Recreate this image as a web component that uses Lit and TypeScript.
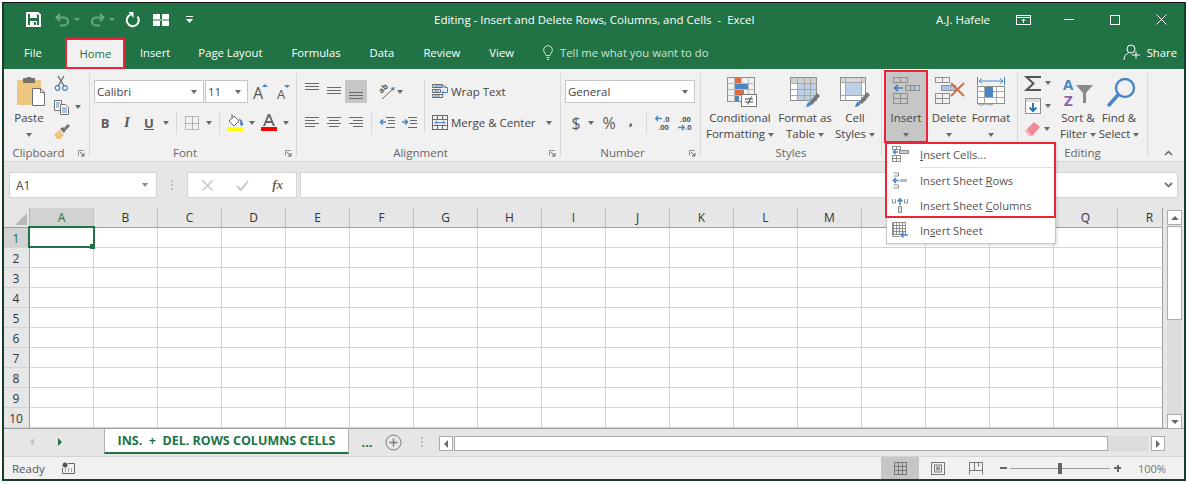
import { LitElement, html, css, svg } from "lit";
import { customElement } from "lit/decorators.js";

const ic = (w: number, h: number, c: unknown, cls = "") =>
  html`<svg class="ic ${cls}" width=${w} height=${h} viewBox="0 0 ${w} ${h}" fill="none">${c}</svg>`;

const G = "#6e6e6e", B = "#4a86c4", O = "#e0693f", L = "#8f8f8f";

const table2 = (x: number, y: number, cw: number, ch: number, cols: number, rows: number, col = L) => {
  const out: unknown[] = [];
  for (let i = 0; i < cols; i++) for (let j = 0; j < rows; j++)
    out.push(svg`<rect x=${x + i * cw + 0.5} y=${y + j * ch + 0.5} width=${cw} height=${ch} stroke=${col}/>`);
  return out;
};
const vlines = (ys: number[], x1 = 0, x2 = 14) =>
  ic(15, 23, svg`${ys.map((y) => svg`<path d="M${x1} ${y}H${x2}" stroke="#6a6a6a"/>`)}`);

const I = {
  save: ic(15, 15, svg`<path d="M1 1h11l2 2v11H1z" stroke="#fff" stroke-width="2" fill="none"/><rect x="4" y="2" width="7" height="4" fill="#fff"/><rect x="4" y="9" width="7" height="5" fill="#fff"/><rect x="8" y="10" width="2" height="3" fill="#217346"/>`),
  undo: ic(15, 13, svg`<path d="M5 1L1.5 4.5 5 8M2 4.5h7a4 4 0 0 1 0 8H5" stroke="#6ba884" stroke-width="2"/>`),
  redo: ic(15, 13, svg`<path d="M10 1l3.5 3.5L10 8M13 4.5H6a4 4 0 0 0 0 8h4" stroke="#6ba884" stroke-width="2"/>`),
  refresh: ic(15, 15, svg`<path d="M5.500 2.600a6 6 0 1 0 7 1.900" stroke="#fff" stroke-width="2"/><path d="M2.500 0l5 0 0 6z" fill="#fff" transform="translate(1 0)"/>`),
  grid: ic(16, 12, svg`<rect width="7" height="5" fill="#fff"/><rect x="9" width="7" height="5" fill="#fff"/><rect y="7" width="7" height="5" fill="#fff"/><rect x="9" y="7" width="7" height="5" fill="#fff"/><path d="M0 6h16" stroke="#fff"/>`),
  custom: ic(7, 8, svg`<path d="M0 .5h7" stroke="#fff"/><path d="M0 3h7L3.5 7z" fill="#fff"/>`),
  display: ic(15, 10, svg`<rect x=".5" y=".5" width="14" height="9" stroke="#fff"/><path d="M.5 2.5h14" stroke="#fff"/><path d="M7.5 8V4M5.5 6l2-2 2 2" stroke="#fff"/>`),
  min: ic(10, 1, svg`<rect width="10" height="1" fill="#fff"/>`),
  max: ic(10, 10, svg`<rect x=".5" y=".5" width="9" height="9" stroke="#fff"/>`),
  close: ic(11, 11, svg`<path d="M.5.5l10 10M10.5.5l-10 10" stroke="#fff"/>`),
  bulb: ic(10, 15, svg`<path d="M3 10.5C2.5 8.5.7 7.5.7 5a4.3 4.3 0 0 1 8.6 0c0 2.5-1.800 3.500-2.300 5.500zM3.500 12.500h3M4 14.500h2" stroke="#cfe3d7"/>`),
  share: ic(18, 17, svg`<circle cx="8" cy="5" r="4" stroke="#fff"/><path d="M1 16c0-4 2-6 4.500-7M9 11h8M13 7.500v7" stroke="#fff"/>`),
  paste: ic(29, 30, svg`<rect y="3" width="24" height="25" rx="1" fill="#edc67f"/><rect x="6" y="1" width="12" height="5" fill="#77736c"/><rect x="10" y="0" width="4" height="3" fill="#77736c"/><path d="M15.500 11.500h8l4 4v13h-12z" fill="#fff" stroke="#6e6e6e"/><path d="M23.500 11.500v4h4" stroke="#6e6e6e"/>`, "r2"),
  cut: ic(15, 15, svg`<path d="M4 0l6 10M10 0L4 10" stroke="#6e6e6e" stroke-width="1.400"/><circle cx="3.500" cy="12" r="2.300" stroke="${B}" stroke-width="1.200"/><circle cx="11" cy="12" r="2.300" stroke="${B}" stroke-width="1.200"/>`),
  copy: ic(16, 15, svg`<path d="M.5.5h7v10h-7z" stroke="${G}" fill="#fff"/><path d="M6.500 4.500h5l3 3v7h-8z" stroke="${G}" fill="#fff"/><path d="M2 3h4M2 5h3M2 7h3M8 8h5M8 10h5M8 12h5" stroke="${B}"/>`),
  brush: ic(16, 15, svg`<path d="M0 11l5-5 5 5-4 4H3z" fill="#edc67f"/><path d="M6 5l3-2 3 3-2 3z" fill="#77736c"/><path d="M10 4l4-4 2 2-4 4z" fill="#77736c"/>`),
  growA: ic(15, 17, svg`<text x="0" y="16" font-size="16" font-family="Open Sans" fill="#555">A</text><path d="M9 4l3-3 3 3z" fill="${B}"/>`),
  shrinkA: ic(13, 15, svg`<text x="0" y="14" font-size="13" font-family="Open Sans" fill="#555">A</text><path d="M7 0h6l-3 3z" fill="${B}"/>`),
  border: ic(14, 14, svg`<path d="M.5.5h13v13H.5zM7.500 .5v13M.5 7.500h13" stroke="#7d7d7d" stroke-dasharray="1 1"/>`),
  fill: ic(17, 17, svg`<path d="M2 7l5-5 5 5-5 5z" stroke="#666" fill="#fff"/><path d="M5 0v5" stroke="#666"/><path d="M12 5a4 4 0 0 1 3 5l1-.500-1.500 2.500-1.500-3 1 .500" fill="${B}" stroke="${B}"/><rect y="13" width="16" height="4" fill="#ffff00"/>`),
  fontA: ic(16, 17, svg`<path d="M2 12L7 0h2l5 12h-2l-1.300-3H5.300L4 12zM6 7h4L8 2.500z" fill="#666" fill-rule="evenodd"/><rect y="13" width="16" height="4" fill="#ff0000"/>`),
  alTop: vlines([3.5, 6.5, 9.5]),
  alMid: vlines([7.5, 10.5, 13.5]),
  alBot: vlines([12.5, 15.5, 18.5], 0, 14),
  alignL: ic(15, 11, svg`<path d="M0 .5h14M0 3.500h10M0 6.500h14M0 9.500h10" stroke="#6a6a6a"/>`),
  alignC: ic(15, 11, svg`<path d="M0 .5h14M2 3.500h10M0 6.500h14M2 9.500h10" stroke="#6a6a6a"/>`),
  alignR: ic(15, 11, svg`<path d="M0 .5h14M4 3.500h10M0 6.500h14M4 9.500h10" stroke="#6a6a6a"/>`),
  orient: ic(17, 16, svg`<text transform="translate(2.500 10) rotate(-45)" font-size="8" font-family="Open Sans" fill="#555">ab</text><path d="M3 15L14 5" stroke="#666"/><path d="M16 3l-4.500 1 3 3z" fill="${B}"/>`),
  indL: ic(16, 12, svg`<path d="M7 .5h9M9 3.500h7M9 6.500h7M7 10.500h9" stroke="#6a6a6a"/><path d="M7 5H2M4 2.500L1.500 5 4 7.500" stroke="${B}" stroke-width="1.600"/>`),
  indR: ic(16, 12, svg`<path d="M7 .5h9M9 3.500h7M9 6.500h7M7 10.500h9" stroke="#6a6a6a"/><path d="M1 5h5M4 2.500L6.500 5 4 7.500" stroke="${B}" stroke-width="1.600"/>`),
  wrap: ic(17, 15, svg`<path d="M.5.5h10v3H.5zM.5 5.500h8v3H.5zM.5 10.500h10v3H.5z" stroke="#6a6a6a"/><path d="M2 2h12M2 7h5M2 12h6" stroke="${B}"/><path d="M12 3.500h3.500v5H10M12 6.500L10 8.500l2 2" stroke="${B}"/>`),
  merge: ic(17, 15, svg`<rect x=".5" y=".5" width="15" height="14" stroke="#6a6a6a"/><path d="M.5 4.500h15M.5 10.500h15M5.500.5v4M10.500.5v4M5.500 10.500v4M10.500 10.500v4" stroke="#6a6a6a"/><path d="M3 7.500h10M5 5.500l-2 2 2 2M11 5.500l2 2-2 2" stroke="${B}"/>`),
  decL: ic(15, 16, svg`<path d="M7 3.500H1M3 1L.7 3.500 3 6" stroke="${B}" stroke-width="1.300"/><text x="8" y="7" font-size="7.500" font-family="Open Sans" fill="#555">.0</text><text x="3" y="15" font-size="7.500" font-family="Open Sans" fill="#555">.00</text>`),
  decR: ic(15, 16, svg`<text x="3" y="7" font-size="7.500" font-family="Open Sans" fill="#555">.00</text><path d="M1 12.500h6M5 10l2.300 2.500L5 15" stroke="${B}" stroke-width="1.300"/><text x="8" y="15" font-size="7.500" font-family="Open Sans" fill="#555">.0</text>`),
  cond: ic(31, 30, svg`<rect x=".5" y=".5" width="27" height="24" stroke="${L}"/><path d="M.5 6.500h27M.5 12.500h27M.5 18.500h27M7.500.5v24M14.500.5v24M21.500.5v24" stroke="#b8b8b8"/><rect x="8" y="1" width="6" height="5" fill="${O}"/><rect x="8" y="7" width="13" height="5" fill="${B}"/><rect x="8" y="13" width="9" height="5" fill="${O}"/><rect x="8" y="19" width="4" height="5" fill="${B}"/><rect x="14.500" y="17.500" width="15" height="12" fill="#fff" stroke="#7a7a7a"/><path d="M18 22h8M18 25h8M24.500 19.500l-4 8" stroke="#444"/>`, "r2"),
  fmtTable: ic(31, 30, svg`<rect x=".5" y=".5" width="26" height="23" stroke="${L}" fill="#fff"/><rect x="7" y="6" width="19" height="17" fill="#bcd0e6"/><rect x="1" y="1" width="25" height="5" fill="#d0d0d0"/><path d="M.5 6.500h26M.5 12.500h26M.5 18.500h26M7.500.5v23M14.500.5v23M20.500.5v23" stroke="#a8a8a8"/><path d="M19 26l8-10 3 3-8 9z" fill="#777"/><path d="M16 30c1-5 3-6 5-5 1 2-1 5-5 5z" fill="${B}"/>`),
  cellStyles: ic(30, 30, svg`<rect x=".5" y=".5" width="25" height="23" stroke="${L}" fill="#fff"/><rect x="1" y="1" width="24" height="4" fill="#d8d8d8"/><rect x="6" y="6" width="15" height="12" fill="#bcd0e6"/><path d="M.5 5.500h25M.5 18.500h25M5.500.5v23M21.500.5v23" stroke="#a8a8a8"/><path d="M19 25l8-10 3 3-8 9z" fill="#777"/><path d="M15 30c1-5 3-6 5-5 1 2-1 5-5 5z" fill="${B}"/>`),
  insCells: ic(27, 27, svg`${table2(0, 0, 7, 5, 2, 1)}<rect x="12.500" y="8.500" width="14" height="5" stroke="${L}"/><rect x="17" y="9" width="5" height="4" fill="#a9c4e0"/><path d="M12.500 8.500v5M17.500 8.500v5M22 8.500v5" stroke="${L}"/><path d="M10 11H2M5 8L1.500 11 5 14" stroke="${B}" stroke-width="1.700"/>${table2(0, 16, 7, 5, 2, 2)}`),
  delCells: ic(31, 27, svg`${table2(0, 0, 7, 5, 2, 1)}<rect x="6.500" y="8.500" width="14" height="5" stroke="${L}"/><rect x="7" y="9" width="13" height="4" fill="#a9c4e0"/>${table2(0, 16, 7, 5, 2, 2)}<path d="M16 6l13 13M29 6L16 19" stroke="${O}" stroke-width="2"/>`, "r1"),
  format: ic(29, 30, svg`<path d="M2 4h24M5 1.500L2 4l3 2.500M23 1.500L26 4l-3 2.500M.5 0v8M27.500 0v8" stroke="${B}"/><rect x=".5" y="9.500" width="27" height="17" stroke="${L}" fill="#fff"/><path d="M.5 14.500h27M.5 20.500h27M7.500 9.500v17M19.500 9.500v17" stroke="#a8a8a8"/><rect x="8" y="10" width="8" height="10" fill="${B}"/><path d="M1 27c4 3 6-1 9 0s5 2 7-1" stroke="${L}"/>`),
  sigma: ic(16, 15, svg`<path d="M15 2V1H1.500l7 6.500-7 6.500H15v-1" stroke="#555" stroke-width="2" fill="none"/>`),
  fillDown: ic(16, 16, svg`<rect x=".5" y=".5" width="15" height="15" stroke="${L}" fill="#fff"/><rect x="1" y="1" width="14" height="3" fill="#ddd"/><path d="M8 5v8M4.500 9.500L8 13l3.500-3.500" stroke="#2e75b6" stroke-width="2"/>`),
  eraser: ic(15, 14, svg`<path d="M0 9L9 0l6 5-8 9H4z" fill="#ee8a96"/><path d="M0 9l4 5h3L2 7z" fill="#f5b8bf"/>`),
  sort: ic(31, 30, svg`<text x="0" y="13" font-size="15" font-weight="700" font-family="Open Sans" fill="${B}">A</text><text x="1" y="29" font-size="15" font-weight="700" font-family="Open Sans" fill="#8b5fad">Z</text><path d="M13 8h17l-7 8v10h-3V16z" fill="#8a8a8a"/>`),
  find: ic(29, 30, svg`<circle cx="18" cy="11" r="9" stroke="${B}" stroke-width="2.400"/><path d="M11 18L2 28" stroke="${B}" stroke-width="3.500" stroke-linecap="round"/>`, "r2"),
  x: ic(11, 11, svg`<path d="M.5.5l10 10M10.500.5l-10 10" stroke="#c8c8c8" stroke-width="1.600"/>`),
  check: ic(13, 11, svg`<path d="M1 6l4 4 7-9" stroke="#c8c8c8" stroke-width="2"/>`),
  chev: ic(9, 6, svg`<path d="M1 1l3.500 3.500L8 1" stroke="#777" stroke-width="1.800"/>`),
  chevUp: ic(9, 6, svg`<path d="M1 5l3.500-3.500L8 5" stroke="#666" stroke-width="1.500"/>`),
  launcher: ic(7, 7, svg`<path d="M.5.500h5M.5.500v5" stroke="#8a8a8a"/><path d="M2 2l4 4M3 6h3V3" stroke="#666"/>`),
  corner: ic(12, 12, svg`<path d="M12 0v12H0z" fill="#b8b8b8"/>`),
  plus: ic(17, 17, svg`<circle cx="8.500" cy="8.500" r="7.500" stroke="#7a7a7a"/><path d="M4.500 8.500h8M8.500 4.500v8" stroke="#7a7a7a" stroke-width="1.400"/>`),
  macro: ic(13, 12, svg`<circle cx="3" cy="3" r="2.500" fill="#555"/><path d="M6 1.500h6.500v10H.5V6" stroke="#666"/><path d="M3 7h1M6 7h1M9 7h1M3 9h1M6 9h1M9 9h1" stroke="#555"/>`),
  normal: ic(13, 13, svg`${table2(0, 0, 4, 4, 3, 3, "#777")}`),
  pageLayout: ic(14, 13, svg`<rect x=".5" y=".5" width="13" height="12" stroke="#777"/><rect x="3.500" y="3" width="7" height="7" stroke="#777"/><path d="M5 5h4M5 6.500h4M5 8h4" stroke="#777"/>`),
  pageBreak: ic(14, 13, svg`<path d="M.5 12.500V.5h13v12M.5 8.500h13M5.500.5v8M9.500.5v4" stroke="#777"/>`),
  mCells: ic(17, 16, svg`${table2(0, 0, 4, 3, 2, 1)}<path d="M6 6H1.500M3.500 4L1.500 6l2 2" stroke="${B}" stroke-width="1.500"/><rect x="7.500" y="4.500" width="9" height="3" fill="#c9c9c9" stroke="${L}"/>${table2(0, 9, 4, 3, 2, 2)}`),
  mRows: ic(16, 15, svg`<path d="M1.500 0h5v3h-5M1.500 12h5v3h-5" stroke="${L}"/><path d="M7 7.500H1.500M4 5L1.500 7.500 4 10" stroke="${B}" stroke-width="1.600"/><rect x="8" y="6" width="7" height="3" fill="#bbb"/>`),
  mCols: ic(16, 15, svg`<path d="M.5 1v4h3V1M12.500 1v4h3V1" stroke="${L}"/><path d="M8 7V1M5.500 3.500L8 1l2.500 2.500" stroke="${B}" stroke-width="1.600"/><rect x="6.500" y="8.500" width="3" height="6" stroke="${L}" fill="#ddd"/>`),
  mSheet: ic(17, 16, svg`${table2(1, 0, 3, 3, 4, 4)}<path d="M.5.5v14h7" stroke="${L}"/><path d="M16 13H9M11.500 10.500L9 13l2.500 2.500" stroke="${B}" stroke-width="1.500"/>`),
};

const caret = html`<span class="caret"></span>`;
const u = (s: string) => html`<span class="ul">${s}</span>`;

@customElement("app-root")
export class AppRoot extends LitElement {
  static styles = css`
    :host { display: block; width: 1186px; height: 484px; background: #fff; padding: 2px 0 0 2px; box-sizing: border-box; overflow: hidden;
      font-family: "Open Sans", "Noto Sans", sans-serif; font-size: 11.5px; color: #444; }
    * { box-sizing: border-box; }
    .ic { display: block; flex: none; overflow: visible; }
    .ic.r1 { transform: translateX(1px); }
    .ic.r2 { transform: translateX(2px); }
    .frame { position: relative; width: 1184px; height: 479px; border-top: 1px solid #111; border-left: 2px solid #163f28; border-right: 2px solid #163f28; border-bottom: 2px solid #163f28; display: flex; flex-direction: column; background: #e6e6e6; }
    .title { height: 33px; background: #217346; display: flex; align-items: center; color: #fff; flex: none; }
    .qat { display: flex; align-items: center; padding-left: 22px; width: 430px; flex: none; }
    .qat .m14 { margin-right: 14px; }
    .qc { width: 6px; margin: 0 10px 0 4px; border-top: 3px solid #6ba884; border-left: 3px solid transparent; border-right: 3px solid transparent; flex: none; }
    .qat .m13 { margin-right: 13px; }
    .qat .m17 { margin-right: 17px; }
    .doc { width: 318px; white-space: pre; text-align: center; flex: none; }
    .user { margin-left: auto; display: flex; align-items: center; padding-right: 17px; }
    .user .nm { margin-right: 26px; }
    .user .b1 { margin-right: 33px; }
    .user .b2 { margin-right: 36px; }
    .user .b3 { margin-right: 36px; }
    .tabs { height: 33px; background: #217346; display: flex; color: #fff; padding-left: 5.500px; flex: none; font-size: 11.300px; }
    .tab { padding: 0 14.5px; height: 31px; margin-top: 2px; line-height: 29px; white-space: nowrap; flex: none; }
    .tab.file { margin-right: 9px; }
    .tab.tight { padding-right: 13.500px; }
    .tab.on { background: #f1f1f1; color: #217346; border: 2px solid #ee2436; padding: 0; width: 60px; text-align: center; line-height: 27px; }
    .tell { display: flex; align-items: center; color: #cfe3d7; gap: 7px; margin: 2px 0 0 14.500px; height: 31px; padding-bottom: 2px; }
    .share { margin-left: auto; display: flex; align-items: center; gap: 6px; padding: 0 7px 2px 0; margin-top: 2px; height: 31px; }
    .ribbon { height: 93px; background: #f1f1f1; border-bottom: 1px solid #d4d4d4; display: flex; padding-top: 4px; flex: none; }
    .group { height: 84px; border-right: 1px solid #d9d9d9; display: flex; flex-direction: column; flex: none; }
    .g-clip { width: 86px; } .g-font { width: 207px; } .g-align { width: 264px; } .g-num { width: 140px; } .g-styles { width: 181px; } .g-cells { width: 136px; } .g-edit { width: 130px; }
    .body { height: 69px; display: flex; flex: none; }
    .lab { height: 15px; display: flex; color: #666; line-height: 14px; margin-top: 4px; }
    .lab span { flex: 1; text-align: center; }
    .launch { width: 16px; padding: 4px 0 0 5px; }
    .big { display: flex; flex-direction: column; align-items: center; flex: none; text-align: center; height: 69px; line-height: 16px; white-space: nowrap; }
    .big .slot { height: 37px; flex: none; display: flex; align-items: flex-start; padding-top: 4px; }
    .w50 { width: 50px; } .w70 { width: 70px; } .w60 { width: 60px; } .w40 { width: 40px; } .w42 { width: 42px; }
    .big.insert { width: 44px; background: #c6c6c6; border: 2px solid #ee2436; margin: -3px 0 0 2px; height: 73px; padding-top: 1px; }
    .stack { display: flex; flex-direction: column; flex: none; }
    .st-clip { padding: 2px 0 0 0; gap: 8px; }
    .st-edit { padding: 2px 0 0 7px; width: 40px; gap: 7px; }
    .st { display: flex; align-items: center; height: 16px; }
    .st .caret { margin-left: 5px; }
    .st-edit .caret { margin-left: 4px; }
    .rows { display: flex; flex-direction: column; padding-top: 7px; gap: 8px; flex: none; }
    .row { display: flex; align-items: center; height: 23px; }
    .pad4 { padding-left: 4px; }
    .tb { width: 22px; height: 23px; display: flex; align-items: center; justify-content: center; flex: none; font-size: 13px; font-weight: 700; color: #5a5a5a; }
    .tb.hit { background: #c6c6c6; }
    .tb.i { font-style: italic; font-family: "Liberation Serif", serif; font-size: 15px; }
    .tb.u { text-decoration: underline; }
    .tb.big-t { font-size: 16px; font-weight: 400; }
    .tb.cm { font-size: 15px; font-weight: 700; padding-bottom: 7px; }
    .c12 { width: 12px; display: flex; justify-content: center; flex: none; }
    .c8 { width: 8px; display: flex; justify-content: center; flex: none; }
    .m3 { margin-left: 3px; }
    .vs { width: 1px; height: 22px; background: #d9d9d9; margin: 0 4px; flex: none; }
    .caret { display: inline-block; width: 0; height: 0; border-top: 4px solid #6a6a6a; border-left: 3.5px solid transparent; border-right: 3.5px solid transparent; vertical-align: middle; flex: none; }
    .box { height: 23px; background: #fff; border: 1px solid #c6c6c6; display: flex; align-items: center; justify-content: space-between; padding: 0 6px 0 2px; color: #444; flex: none; }
    .f1 { width: 110px; } .f2 { width: 43px; margin-left: 1px; } .num { width: 130px; }
    .gA { margin-left: 5px; } .sA { margin-left: 9px; margin-top: 2px; }
    .a-left { width: 127px; flex: none; }
    .tall { width: 1px; height: 54px; background: #d9d9d9; margin-top: 6px; flex: none; }
    .a-right { padding: 7px 0 0 7px; display: flex; flex-direction: column; gap: 8px; flex: none; }
    .lt { display: flex; align-items: center; height: 23px; gap: 2px; white-space: nowrap; }
    .lt .caret { margin-left: 8px; }
    .orient { margin-left: 9px; }
    .m-2 { margin-left: -2px; }
    .s4 { padding-left: 4px; }
    .collapse { flex: 1; display: flex; justify-content: flex-end; padding: 77px 11px 0 0; }
    .fbar { height: 46px; flex: none; padding: 10px 6px 0 5px; display: flex; align-items: flex-start; background: #e6e6e6; }
    .fbox { height: 26px; background: #fff; border: 1px solid #d4d4d4; display: flex; align-items: center; flex: none; }
    .name { width: 148px; padding: 0 8px 0 6px; justify-content: space-between; font-size: 12px; }
    .name .caret { border-top-color: #8a8a8a; }
    .dots { width: 30px; display: flex; justify-content: center; flex: none; height: 26px; align-items: center; }
    .dots i, .tdots i { display: block; width: 2px; height: 10px; background: repeating-linear-gradient(#bbb 0 2px, transparent 2px 4px); }
    .fx { width: 110px; justify-content: space-between; padding: 0 13px 0 14px; }
    .fx em { font-family: "Liberation Serif", serif; font-style: italic; font-weight: 700; color: #666; font-size: 13px; }
    .formula { flex: 1; margin-left: 3px; justify-content: flex-end; padding-right: 4px; }
    .sheet { height: 221px; display: flex; flex: none; border-bottom: 1px solid #9f9f9f; }
    .gridwrap { width: 1159px; height: 220px; overflow: hidden; position: relative; flex: none; background: #fff; border-right: 1px solid #9f9f9f; }
    .grid { display: grid; grid-template-columns: 26px repeat(18, 64px); grid-auto-rows: 20px; width: 1178px; }
    .hd { background: #e6e6e6; display: flex; align-items: center; justify-content: center; border-right: 1px solid #b5b5b5; border-bottom: 1px solid #9f9f9f; font-size: 12px; color: #333; }
    .hd.col { border-right: 1px solid #c0c0c0; }
    .hd.on { background: #d2d2d2; color: #217346; }
    .hd.corner { justify-content: flex-end; align-items: flex-end; padding: 0 2px 2px 0; }
    .hd.rowh { border-bottom: 1px solid #d4d4d4; border-right: 1px solid #9f9f9f; padding: 1px 1px 0 0; }
    .cell { border-right: 1px solid #d4d4d4; border-bottom: 1px solid #d4d4d4; background: #fff; }
    .cursel { position: absolute; left: 24px; top: 18px; width: 67px; height: 22px; border: 2px solid #217346; pointer-events: none; }
    .cursel::after { content: ""; position: absolute; right: -2px; bottom: -3px; width: 5px; height: 5px; background: #217346; }
    .vsb { width: 15px; margin: 2px 0 0 4px; display: flex; flex-direction: column; height: 219px; flex: none; }
    .sbtn { background: #fff; border: 1px solid #ababab; display: flex; align-items: center; justify-content: center; flex: none; }
    .vsb .sbtn { height: 15px; }
    .up { width: 0; height: 0; border-bottom: 4px solid #6a6a6a; border-left: 4px solid transparent; border-right: 4px solid transparent; }
    .down { width: 0; height: 0; border-top: 4px solid #6a6a6a; border-left: 4px solid transparent; border-right: 4px solid transparent; }
    .lf { width: 0; height: 0; border-right: 4px solid #6a6a6a; border-top: 4px solid transparent; border-bottom: 4px solid transparent; }
    .rt { width: 0; height: 0; border-left: 4px solid #6a6a6a; border-top: 4px solid transparent; border-bottom: 4px solid transparent; }
    .vthumb { height: 94px; background: #fff; border: 1px solid #ababab; margin-top: 1px; flex: none; }
    .vtrack { flex: 1; background: #dcdcdc; }
    .tabstrip { height: 28px; display: flex; align-items: flex-start; flex: none; background: #e6e6e6; border-bottom: 1px solid #d4d4d4; }
    .nav { width: 100px; height: 26px; display: flex; align-items: center; padding-left: 26px; gap: 24px; flex: none; }
    .nav .lf { border-right-color: #c4c4c4; }
    .nav .rt { border-left-color: #217346; }
    .sheet-tab { width: 245px; height: 25px; background: #fff; border: 1px solid #b5b5b5; border-top: 0; border-bottom: 2px solid #217346; color: #217346; font-weight: 700; display: flex; align-items: center; justify-content: center; font-size: 12.500px; white-space: pre; flex: none; }
    .more { width: 36px; text-align: center; color: #217346; font-weight: 700; line-height: 26px; flex: none; font-size: 13px; }
    .add { width: 17px; margin: 5px 0 0 0; flex: none; }
    .tdots { width: 2px; margin: 8px 0 0 19px; flex: none; }
    .hsb { margin: 7px 0 0 16px; display: flex; width: 726px; height: 15px; flex: none; }
    .hsb .sbtn { width: 14px; }
    .hthumb { width: 654px; background: #fff; border: 1px solid #ababab; margin-left: 1px; flex: none; }
    .htrack { flex: 1; background: #dcdcdc; margin-right: 3px; }
    .status { flex: 1; background: #f1f1f1; display: flex; align-items: center; padding-left: 8px; color: #555; }
    .ready { width: 50px; }
    .views { margin-left: auto; display: flex; align-items: center; height: 100%; margin-right: 4px; }
    .view { width: 38px; height: 100%; display: flex; align-items: center; justify-content: center; flex: none; }
    .view.on { background: #c6c6c6; }
    .zoom { display: flex; align-items: center; margin-right: 16px; }
    .zb { width: 9px; height: 9px; display: flex; align-items: center; justify-content: center; position: relative; flex: none; }
    .zb::before { content: ""; width: 7px; height: 2px; background: #666; }
    .zb.p::after { content: ""; position: absolute; width: 2px; height: 7px; background: #666; }
    .slider { width: 100px; height: 1px; background: #9a9a9a; margin: 0 3px 0 2px; position: relative; }
    .slider::after { content: ""; position: absolute; left: 48px; top: -5px; width: 4px; height: 11px; background: #666; }
    .pct { width: 30px; margin-right: 16px; color: #777; font-size: 11px; }
    .menu { position: absolute; left: 882px; top: 139px; width: 170px; height: 102px; background: #fff; border: 1px solid #c6c6c6; box-shadow: 1px 1px 3px rgba(0,0,0,.15); display: flex; flex-direction: column; }
    .mi { display: flex; align-items: center; padding: 0 0 2px 5px; color: #555; font-size: 11.200px; flex: none; }
    .mi .ig { width: 28px; flex: none; }
    .mi.h25 { height: 25px; padding-bottom: 1px; } .mi.h26 { height: 26px; } .mi.h24 { height: 24px; }
    .msep { height: 1px; background: #e0e0e0; margin-left: 33px; margin-right: 1px; flex: none; }
    .ul { text-decoration: underline; }
    .mred { position: absolute; left: -2px; top: -1px; width: 171px; height: 76px; border: 2px solid #ee2436; pointer-events: none; }
  `;

  render() {
    const cols = "ABCDEFGHIJKLM   QR".split("");
    const rows = Array.from({ length: 10 }, (_, i) => i + 1);
    return html`<div class="frame">
      <div class="title">
        <div class="qat">
          <span class="m14">${I.save}</span>${I.undo}<span class="qc"></span>${I.redo}<span class="qc"></span>
          <span class="m13">${I.refresh}</span><span class="m17">${I.grid}</span>${I.custom}
        </div>
        <div class="doc">Editing - Insert and Delete Rows, Columns, and Cells  -  Excel</div>
        <div class="user"><span class="nm">A.J. Hafele</span><span class="b1">${I.display}</span><span class="b2">${I.min}</span><span class="b3">${I.max}</span>${I.close}</div>
      </div>
      <div class="tabs">
        <div class="tab file">File</div><div class="tab on">Home</div><div class="tab tight">Insert</div><div class="tab">Page Layout</div><div class="tab">Formulas</div><div class="tab">Data</div><div class="tab">Review</div><div class="tab">View</div>
        <div class="tell">${I.bulb}<span>Tell me what you want to do</span></div>
        <div class="share">${I.share}<span>Share</span></div>
      </div>
      <div class="ribbon">
        <div class="group g-clip">
          <div class="body">
            <div class="big w50"><div class="slot">${I.paste}</div><div>Paste</div><div>${caret}</div></div>
            <div class="stack st-clip">
              <div class="st">${I.cut}</div>
              <div class="st">${I.copy}${caret}</div>
              <div class="st">${I.brush}</div>
            </div>
          </div>
          <div class="lab"><span>Clipboard</span><div class="launch">${I.launcher}</div></div>
        </div>
        <div class="group g-font">
          <div class="body"><div class="rows pad4">
            <div class="row">
              <div class="box f1"><span>Calibri</span>${caret}</div>
              <div class="box f2"><span>11</span>${caret}</div>
              <span class="gA">${I.growA}</span><span class="sA">${I.shrinkA}</span>
            </div>
            <div class="row">
              <div class="tb">B</div><div class="tb i">I</div><div class="tb u">U</div><div class="c12">${caret}</div>
              <div class="vs"></div><div class="tb">${I.border}</div><div class="c12">${caret}</div>
              <div class="vs"></div><div class="tb">${I.fill}</div><div class="c12">${caret}</div>
              <div class="tb">${I.fontA}</div><div class="c12">${caret}</div>
            </div>
          </div></div>
          <div class="lab"><span>Font</span><div class="launch">${I.launcher}</div></div>
        </div>
        <div class="group g-align">
          <div class="body">
            <div class="rows pad4 a-left">
              <div class="row">
                <div class="tb">${I.alTop}</div>
                <div class="tb">${I.alMid}</div>
                <div class="tb hit">${I.alBot}</div>
                <div class="tb orient">${I.orient}</div><div class="c8 m-2">${caret}</div>
              </div>
              <div class="row">
                <div class="tb">${I.alignL}</div><div class="tb">${I.alignC}</div><div class="tb">${I.alignR}</div>
                <div class="vs"></div><div class="tb">${I.indL}</div><div class="tb">${I.indR}</div>
              </div>
            </div>
            <div class="tall"></div>
            <div class="a-right">
              <div class="lt">${I.wrap}<span>Wrap Text</span></div>
              <div class="lt">${I.merge}<span>Merge &amp; Center</span>${caret}</div>
            </div>
          </div>
          <div class="lab"><span>Alignment</span><div class="launch">${I.launcher}</div></div>
        </div>
        <div class="group g-num">
          <div class="body"><div class="rows pad4">
            <div class="row"><div class="box num"><span>General</span>${caret}</div></div>
            <div class="row">
              <div class="tb big-t">$</div><div class="c8">${caret}</div><div class="tb big-t m3">%</div><div class="tb cm">,</div>
              <div class="vs"></div><div class="tb">${I.decL}</div><div class="tb">${I.decR}</div>
            </div>
          </div></div>
          <div class="lab"><span>Number</span><div class="launch">${I.launcher}</div></div>
        </div>
        <div class="group g-styles">
          <div class="body s4">
            <div class="big w70"><div class="slot">${I.cond}</div><div>Conditional</div><div>Formatting ${caret}</div></div>
            <div class="big w60"><div class="slot">${I.fmtTable}</div><div>Format as</div><div>Table ${caret}</div></div>
            <div class="big w40"><div class="slot">${I.cellStyles}</div><div>Cell</div><div>Styles ${caret}</div></div>
          </div>
          <div class="lab"><span>Styles</span></div>
        </div>
        <div class="group g-cells">
          <div class="body">
            <div class="big insert"><div class="slot">${I.insCells}</div><div>Insert</div><div>${caret}</div></div>
            <div class="big w42"><div class="slot">${I.delCells}</div><div>Delete</div><div>${caret}</div></div>
            <div class="big w42"><div class="slot">${I.format}</div><div>Format</div><div>${caret}</div></div>
          </div>
          <div class="lab"></div>
        </div>
        <div class="group g-edit">
          <div class="body">
            <div class="stack st-edit">
              <div class="st">${I.sigma}${caret}</div>
              <div class="st">${I.fillDown}${caret}</div>
              <div class="st">${I.eraser}${caret}</div>
            </div>
            <div class="big w40"><div class="slot">${I.sort}</div><div>Sort &amp;</div><div>Filter ${caret}</div></div>
            <div class="big w42"><div class="slot">${I.find}</div><div>Find &amp;</div><div>Select ${caret}</div></div>
          </div>
          <div class="lab"><span>Editing</span></div>
        </div>
        <div class="collapse">${I.chevUp}</div>
      </div>
      <div class="fbar">
        <div class="fbox name"><span>A1</span>${caret}</div>
        <div class="dots"><i></i></div>
        <div class="fbox fx">${I.x}${I.check}<em>fx</em></div>
        <div class="fbox formula">${I.chev}</div>
      </div>
      <div class="sheet">
        <div class="gridwrap">
          <div class="grid">
            <div class="hd corner">${I.corner}</div>
            ${cols.map((c, i) => html`<div class="hd col ${i === 0 ? "on" : ""}">${c.trim()}</div>`)}
            ${rows.map((r) => html`<div class="hd rowh ${r === 1 ? "on" : ""}">${r}</div>${cols.map(() => html`<div class="cell"></div>`)}`)}
          </div>
          <div class="cursel"></div>
        </div>
        <div class="vsb">
          <div class="sbtn"><span class="up"></span></div>
          <div class="vthumb"></div>
          <div class="vtrack"></div>
          <div class="sbtn"><span class="down"></span></div>
        </div>
      </div>
      <div class="tabstrip">
        <div class="nav"><span class="lf"></span><span class="rt"></span></div>
        <div class="sheet-tab">INS.  +  DEL. ROWS COLUMNS CELLS</div>
        <div class="more">...</div>
        <div class="add">${I.plus}</div>
        <div class="tdots"><i></i></div>
        <div class="hsb">
          <div class="sbtn"><span class="lf"></span></div>
          <div class="hthumb"></div>
          <div class="htrack"></div>
          <div class="sbtn"><span class="rt"></span></div>
        </div>
      </div>
      <div class="status">
        <span class="ready">Ready</span>${I.macro}
        <div class="views">
          <div class="view on">${I.normal}</div><div class="view">${I.pageLayout}</div><div class="view">${I.pageBreak}</div>
        </div>
        <div class="zoom"><span class="zb"></span><span class="slider"></span><span class="zb p"></span></div>
        <span class="pct">100%</span>
      </div>
      <div class="menu">
        <div class="mi h24"><span class="ig">${I.mCells}</span><span>${u("I")}nsert Cells...</span></div>
        <div class="msep"></div>
        <div class="mi h26"><span class="ig">${I.mRows}</span><span>Insert Sheet ${u("R")}ows</span></div>
        <div class="mi h24"><span class="ig">${I.mCols}</span><span>Insert Sheet ${u("C")}olumns</span></div>
        <div class="mi h25"><span class="ig">${I.mSheet}</span><span>In${u("s")}ert Sheet</span></div>
        <div class="mred"></div>
      </div>
    </div>`;
  }
}
